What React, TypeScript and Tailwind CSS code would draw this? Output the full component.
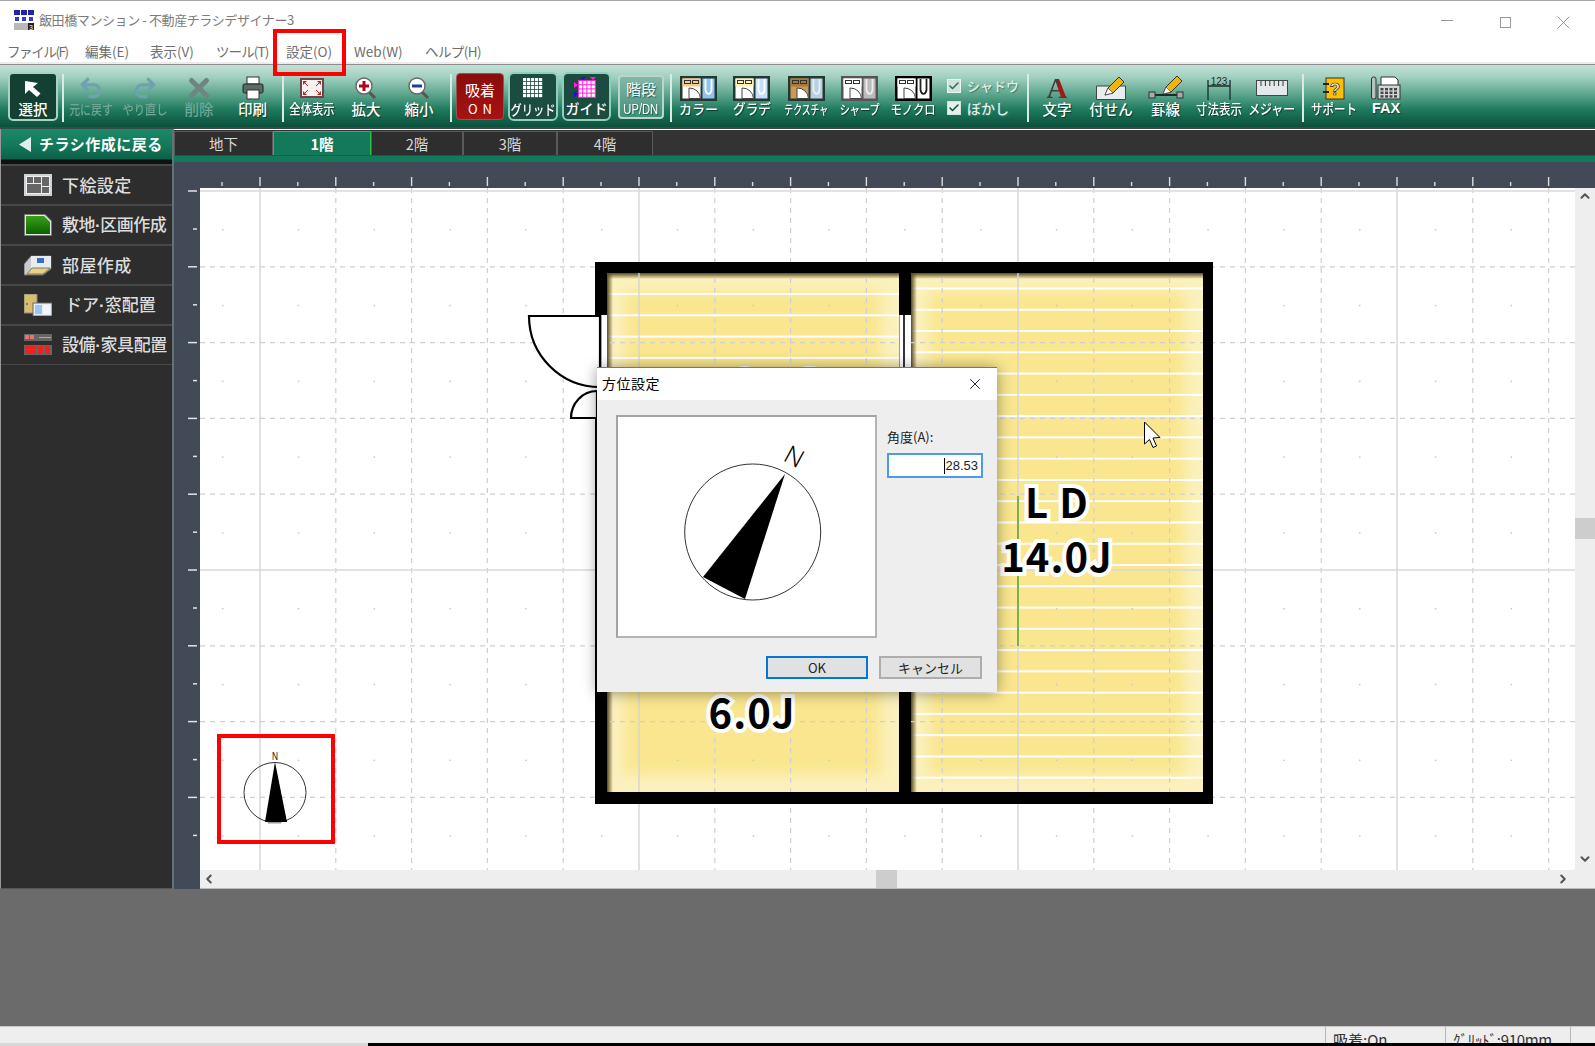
import { Check, ChevronDown, ChevronLeft, ChevronRight, ChevronUp, Redo2, Undo2, X } from 'lucide-react';
import type { ReactNode } from 'react';

const range = (n: number) => Array.from({ length: n }, (_, i) => i);
const STEP = 75.8;

const menus = [
  { label: 'ファイル(F)', cls: 'w-[60px] ml-[7px] tracking-[-1.4px]' },
  { label: '編集(E)', cls: 'w-[47px] ml-[18px]' },
  { label: '表示(V)', cls: 'w-[48px] ml-[18px]' },
  { label: 'ツール(T)', cls: 'w-[51px] ml-[18px] tracking-[-0.9px]' },
  { label: '設定(O)', cls: 'w-[50px] ml-[19px]' },
  { label: 'Web(W)', cls: 'w-[53px] ml-[18px]' },
  { label: 'ヘルプ(H)', cls: 'w-[57px] ml-[18px] tracking-[-0.6px]' },
];

function Tool({ w, label, icon, dim, small }: { w: string; label: string; icon: ReactNode; dim?: boolean; small?: string }) {
  return (
    <div className={`${w} h-[50px] mt-[10px] flex flex-col items-center shrink-0`}>
      <div className="h-[26px] flex items-center justify-center">{icon}</div>
      <div
        className={`h-[15px] leading-[15px] whitespace-nowrap flex justify-center w-full font-medium ${dim ? 'text-[#74a596]' : 'text-white [text-shadow:1px_1px_1px_#123c30]'}`}
      >
        <span className={`block ${small ?? 'text-[14.5px]'}`}>{label}</span>
      </div>
    </div>
  );
}

function Sep({ cls }: { cls: string }) {
  return <div className={`w-[2px] h-[48px] mt-[9px] bg-[#d8ebe4] shrink-0 ${cls}`} />;
}

function PlanIcon({ frame, room, bath, tub, floor }: { frame: string; room: string; bath: string; tub: string; floor: string }) {
  return (
    <svg width="37" height="25" viewBox="0 0 37 25">
      <rect width="37" height="25" fill={frame} />
      <rect x="2.5" y="2.5" width="18" height="20" fill={floor} />
      <rect x="2.5" y="2.5" width="18" height="8" fill={room} />
      <rect x="4.5" y="4.5" width="6" height="3" fill="none" stroke="#333" />
      <rect x="12.5" y="4.5" width="6" height="3" fill="none" stroke="#333" />
      <path d="M9 12 L9 22.5 L20.5 22.5 A11 11 0 0 0 9 12Z" fill="#fff" stroke="#444" />
      <rect x="22.5" y="2.5" width="12" height="20" fill={bath} />
      <path d="M25.5 3 V14 A3.2 6 0 0 0 31.5 14 V3" fill="none" stroke={tub} strokeWidth="1.8" />
    </svg>
  );
}

function Pencil({ x, y }: { x: number; y: number }) {
  return (
    <g transform={`translate(${x} ${y})`}>
      <path d="M0 18 L3 11 L14 0 L19 5 L8 16Z" fill="#f3b40a" stroke="#333" strokeWidth="1" />
      <path d="M0 18 L3 11 L8 16Z" fill="#fff" stroke="#333" strokeWidth="0.6" />
    </g>
  );
}

function SideIcon({ kind }: { kind: number }) {
  if (kind === 0)
    return (
      <svg width="28" height="22" viewBox="0 0 28 22">
        <rect width="28" height="22" fill="#cfd4d8" />
        <rect x="2" y="2" width="24" height="18" fill="#eef0f2" />
        <rect x="3" y="3" width="6" height="6" fill="#666" />
        <rect x="10" y="3" width="7" height="6" fill="#666" />
        <rect x="18" y="3" width="7" height="9" fill="#666" />
        <rect x="3" y="10" width="14" height="9" fill="#666" />
        <rect x="18" y="13" width="7" height="6" fill="#666" />
      </svg>
    );
  if (kind === 1)
    return (
      <svg width="28" height="22" viewBox="0 0 28 22">
        <defs>
          <linearGradient id="lot" x1="0" y1="0" x2="0" y2="1">
            <stop offset="0" stopColor="#3aa018" />
            <stop offset="1" stopColor="#0b6200" />
          </linearGradient>
        </defs>
        <path d="M0.5 0.5H21L27.5 7V21.5H0.5Z" fill="#e8e8e8" stroke="#777" />
        <path d="M2 2H20L26 8V20H2Z" fill="url(#lot)" />
      </svg>
    );
  if (kind === 2)
    return (
      <svg width="28" height="22" viewBox="0 0 28 22">
        <path d="M0 10 L7 2 H27 V15 L19 21 H0Z" fill="#c8ccd0" stroke="#666" />
        <rect x="7" y="2" width="20" height="12" fill="#e8ecf0" />
        <rect x="13" y="4" width="7" height="5" fill="#3a6ec0" />
        <path d="M3 20 L8 14 H26 L19 20Z" fill="#e8cf8a" stroke="#8a7a50" />
      </svg>
    );
  if (kind === 3)
    return (
      <svg width="28" height="22" viewBox="0 0 28 22">
        <rect x="0" y="0" width="13" height="19" fill="#d8bd6e" stroke="#888" />
        <circle cx="3" cy="10" r="0.8" fill="#333" />
        <rect x="9" y="9" width="19" height="13" fill="#e8ecf4" stroke="#666" />
        <rect x="11" y="11" width="7" height="9" fill="#9cc4f0" />
        <rect x="19" y="11" width="7" height="9" fill="#f2f6fc" />
      </svg>
    );
  return (
    <svg width="28" height="22" viewBox="0 0 28 22">
      <rect y="0" width="28" height="7" fill="#666" />
      <rect x="1" y="1" width="4" height="4" fill="#f07070" />
      <rect x="6" y="1" width="4" height="4" fill="#f07070" />
      <rect x="15" y="3" width="12" height="1" fill="#aaa" />
      <rect y="11" width="28" height="10" fill="#666" />
      <rect x="1" y="12" width="11" height="3" fill="#ee2020" />
      <rect x="1" y="16" width="11" height="4" fill="#ee2020" />
      <rect x="14" y="12" width="5" height="8" fill="#ee2020" />
      <rect x="21" y="12" width="5" height="8" fill="#ee2020" />
    </svg>
  );
}

const sideItems = [
  { label: '下絵設定', cls: 'ml-[10px] tracking-[0.4px]' },
  { label: '敷地·区画作成', cls: 'ml-[10px] tracking-[-0.5px]' },
  { label: '部屋作成', cls: 'ml-[10px] tracking-[0.4px]' },
  { label: 'ドア·窓配置', cls: 'ml-[13px]' },
  { label: '設備·家具配置', cls: 'ml-[10px] tracking-[-0.4px]' },
];

const tabs = [
  { label: '地下', w: 'w-[99px]' },
  { label: '1階', w: 'w-[98px]', active: true },
  { label: '2階', w: 'w-[92px]' },
  { label: '3階', w: 'w-[94px]' },
  { label: '4階', w: 'w-[96px]' },
];

function FloorPlan() {
  return (
    <svg className="absolute inset-0" width="1375" height="682" viewBox="200 188 1375 682">
      <defs>
        <filter id="soft" x="-20%" y="-20%" width="140%" height="140%">
          <feGaussianBlur stdDeviation="7" />
        </filter>
        <clipPath id="roomA">
          <rect x="607" y="273" width="292" height="519" />
        </clipPath>
        <clipPath id="roomB">
          <rect x="911" y="273" width="292" height="519" />
        </clipPath>
        <linearGradient id="shadeTop" x1="0" y1="0" x2="0" y2="1">
          <stop offset="0" stopColor="#5a4c20" />
          <stop offset="1" stopColor="#5a4c20" stopOpacity="0" />
        </linearGradient>
        <linearGradient id="shadeLeft" x1="0" y1="0" x2="1" y2="0">
          <stop offset="0" stopColor="#5a4c20" />
          <stop offset="1" stopColor="#5a4c20" stopOpacity="0" />
        </linearGradient>
      </defs>
      {/* walls */}
      <rect x="595" y="262" width="618" height="542" fill="#000" />
      <g clipPath="url(#roomA)">
        <rect x="607" y="273" width="292" height="519" fill="#fbf1bd" />
        <rect x="625" y="291" width="256" height="483" fill="#f9e68e" filter="url(#soft)" />
        {range(4).map((i) => (
          <rect key={i} x="607" y={293 + i * 21.3} width="292" height="2" fill="#fff" />
        ))}
        <rect x="607" y="273" width="292" height="6" fill="url(#shadeTop)" />
        <rect x="607" y="273" width="6" height="519" fill="url(#shadeLeft)" />
      </g>
      <g clipPath="url(#roomB)">
        <rect x="911" y="273" width="292" height="519" fill="#fbf1bd" />
        <rect x="929" y="291" width="256" height="483" fill="#f9e68e" filter="url(#soft)" />
        {range(24).map((i) => (
          <rect key={i} x="911" y={287.5 + i * 21.27} width="292" height="2" fill="#fff" />
        ))}
        <rect x="911" y="273" width="292" height="6" fill="url(#shadeTop)" />
        <rect x="911" y="273" width="6" height="519" fill="url(#shadeLeft)" />
      </g>
      {/* grid */}
      {range(18).map((i) => {
        const x = 260 + i * STEP;
        const solid = i % 5 === 0;
        return <line key={i} x1={x} x2={x} y1="188" y2="870" stroke={solid ? '#d4d4d4' : '#cfcfcf'} strokeWidth={solid ? 1.4 : 1.2} strokeDasharray={solid ? undefined : '5 5'} />;
      })}
      {range(10).map((i) => {
        const y = 191 + i * STEP;
        const solid = i % 5 === 0;
        return <line key={i} x1="200" x2="1575" y1={y} y2={y} stroke={solid ? '#d8d8d8' : '#cfcfcf'} strokeWidth={solid ? 1.6 : 1.2} strokeDasharray={solid ? undefined : '5 5'} />;
      })}
      {range(18).map((i) =>
        range(9).map((j) => <rect key={`${i}-${j}`} x={222 + i * STEP} y={229 + j * STEP} width="1.5" height="1.5" fill="#c8c8c8" />),
      )}
      {/* wall covers over grid */}
      <path d="M595 262H1213V804H595ZM607 273V792H899V273ZM911 273V792H1203V273Z" fill="#000" fillRule="evenodd" />
      {/* openings */}
      <rect x="595" y="315" width="12" height="103" fill="#fff" />
      <line x1="600.5" x2="600.5" y1="315" y2="390" stroke="#000" strokeWidth="1.6" />
      <path d="M529 316 H600 V387 A71 71 0 0 1 529 316Z" fill="#fff" stroke="#000" strokeWidth="2.2" />
      <path d="M597 391 A26 27 0 0 0 571 418 H597Z" fill="#fff" stroke="#000" strokeWidth="2.2" />
      <rect x="899" y="315" width="12" height="52" fill="#fff" />
      <line x1="899.5" x2="899.5" y1="315" y2="367" stroke="#999" strokeWidth="1" />
      <line x1="904" x2="904" y1="315" y2="367" stroke="#000" strokeWidth="1.6" />
      <ellipse cx="745" cy="369" rx="9" ry="3" fill="#fff" />
      <ellipse cx="810" cy="369" rx="12" ry="3" fill="#fff" />
      {/* door on LD */}
      <line x1="1018" x2="1018" y1="496" y2="646" stroke="#5aa02c" strokeWidth="1.5" />
      {/* small compass */}
      <ellipse cx="275" cy="792.5" rx="31" ry="30" fill="none" stroke="#333" strokeWidth="1" />
      <path d="M275 762 L287 822 H265Z" fill="#000" />
      <rect x="268" y="822" width="13" height="1.5" fill="#999" />
      <text x="275" y="760" textAnchor="middle" fontFamily="Liberation Sans" fontSize="11" textLength="6" lengthAdjust="spacingAndGlyphs" fill="#111">
        N
      </text>
      {/* mouse pointer */}
      <path d="M1144.5 422 V444 L1149.5 439.5 L1153 447.5 L1156.5 446 L1153 438 L1160 437.5Z" fill="#fff" stroke="#000" strokeWidth="1" />
    </svg>
  );
}

export default function App() {
  return (
    <div className="relative w-[1595px] h-[1046px] overflow-hidden flex flex-col bg-white font-['Noto_Sans_CJK_JP','Noto_Sans',sans-serif]">
      {/* title bar */}
      <div className="h-[39px] shrink-0 border-t border-[#a8a8a8] flex items-center relative">
        <svg className="ml-[14px]" width="20" height="20" viewBox="0 0 20 20">
          <rect width="20" height="20" fill="#fff" />
          {[0, 7, 14].map((x) => (
            <rect key={x} x={x} y="0" width="6" height="5" fill="#2222b0" />
          ))}
          {[1, 8, 15].map((x) => (
            <rect key={x} x={x} y="7" width="4" height="4" fill="#3a3ac8" />
          ))}
          <rect y="13" width="20" height="7" fill="#b8b8b8" />
          <rect x="14" y="13" width="6" height="7" fill="#222" />
          <text x="15" y="19.5" fontSize="7" fill="#fff" fontFamily="Liberation Sans">
            3
          </text>
        </svg>
        <span className="ml-[5px] text-[13px] text-[#7c7c7c] tracking-[-0.4px] whitespace-pre">飯田橋マンション - 不動産チラシデザイナー3</span>
        <div className="absolute left-[1441px] top-[19px] w-[12px] h-px bg-[#999]" />
        <div className="absolute left-[1500px] top-[16px] w-[11px] h-[11px] border border-[#999]" />
        <svg className="absolute left-[1557px] top-[15px]" width="13" height="13" viewBox="0 0 13 13">
          <path d="M0.5 0.5 L12.5 12.5 M12.5 0.5 L0.5 12.5" stroke="#999" strokeWidth="1" />
        </svg>
      </div>

      {/* menu bar */}
      <div className="h-[23px] shrink-0 flex items-center text-[13.5px] text-[#6e6e6e] whitespace-nowrap pt-[2px]">
        {menus.map((m) => (
          <span key={m.label} className={`block ${m.cls}`}>
            {m.label}
          </span>
        ))}
      </div>
      <div className="h-[3px] shrink-0 bg-[#ececec] border-b border-[#8c8c8c]" />

      {/* toolbar */}
      <div className="h-[62px] shrink-0 flex items-start pl-[8px] bg-[linear-gradient(180deg,#c4e1d7_0%,#a0cfc0_20%,#5aa58c_48%,#1f7a5e_72%,#0a503c_100%)]">
        <div className="w-[50px] h-[49px] mt-[7px] rounded-[5px] border-2 border-[#a9d3c5] bg-[#143f33] flex flex-col items-center shrink-0">
          <svg className="mt-[6px]" width="20" height="18" viewBox="0 0 20 18">
            <path d="M2 1 V14 L6 10 L14 17 L17.5 13.5 L10 7 L15 3Z" fill="#fff" />
          </svg>
          <span className="text-[14.5px] leading-[18px] mt-[2px] text-white font-medium">選択</span>
        </div>
        <Sep cls="ml-[4px]" />
        <Tool w="w-[54px]" label="元に戻す" dim small="text-[13px] scale-x-[.84]" icon={<Undo2 size={26} strokeWidth={3} color="#6da3ad" />} />
        <Tool w="w-[54px]" label="やり直し" dim small="text-[13px] scale-x-[.87]" icon={<Redo2 size={26} strokeWidth={3} color="#6da3ad" />} />
        <Tool w="w-[54px]" label="削除" dim icon={<X size={30} strokeWidth={4} color="#6f8680" />} />
        <Tool
          w="w-[53px]"
          label="印刷"
          icon={
            <svg width="22" height="24" viewBox="0 0 22 24">
              <rect x="5" y="1" width="12" height="7" fill="#fff" stroke="#333" />
              <rect x="1" y="8" width="20" height="9" rx="1.5" fill="#5a6a66" stroke="#222" />
              <rect x="5" y="14" width="12" height="9" fill="#fff" stroke="#333" />
            </svg>
          }
        />
        <Sep cls="ml-[3px]" />
        <Tool
          w="w-[56px]"
          label="全体表示"
          small="text-[13.5px] scale-x-[.84]"
          icon={
            <svg width="24" height="20" viewBox="0 0 24 20">
              <rect width="24" height="20" fill="#6e4444" />
              <rect x="2" y="2" width="20" height="16" fill="#f6f2f2" />
              <path d="M3 3h4l-4 4zM21 3h-4l4 4zM3 17h4l-4-4zM21 17h-4l4-4z" fill="#c02828" />
              <path d="M5 5 L8 8 M19 5 L16 8 M5 15 L8 12 M19 15 L16 12" stroke="#c02828" strokeWidth="1" />
            </svg>
          }
        />
        <Tool
          w="w-[52px]"
          label="拡大"
          icon={
            <svg width="22" height="23" viewBox="0 0 22 23">
              <line x1="14" y1="15" x2="20" y2="21" stroke="#555" strokeWidth="3" />
              <circle cx="9" cy="9" r="8" fill="#fff" stroke="#666" strokeWidth="1.4" />
              <path d="M4 9 H14 M9 4 V14" stroke="#b3061e" strokeWidth="3" />
            </svg>
          }
        />
        <Tool
          w="w-[54px]"
          label="縮小"
          icon={
            <svg width="22" height="23" viewBox="0 0 22 23">
              <line x1="14" y1="15" x2="20" y2="21" stroke="#555" strokeWidth="3" />
              <circle cx="9" cy="9" r="8" fill="#fff" stroke="#666" strokeWidth="1.4" />
              <path d="M4 9 H14" stroke="#1c3f9c" strokeWidth="3" />
            </svg>
          }
        />
        <Sep cls="ml-[4px]" />
        <div className="w-[48px] h-[47px] mt-[8px] ml-[4px] rounded-[4px] border border-[#9c5050] bg-[linear-gradient(180deg,#8a0c0c,#a81212)] flex flex-col items-center shrink-0 text-white">
          <span className="text-[15px] leading-[22px] mt-[5px]">吸着</span>
          <span className="text-[13px] leading-[16px] tracking-[5px] pl-[5px]">ON</span>
        </div>
        <div className="w-[50px] h-[49px] mt-[7px] ml-[4px] rounded-[6px] border-2 border-[#8fd0bc] bg-[#1b4c3f] flex flex-col items-center shrink-0">
          <svg className="mt-[4px]" width="20" height="20" viewBox="0 0 20 20">
            {range(25).map((i) => (
              <rect key={i} x={(i % 5) * 4} y={Math.floor(i / 5) * 4} width="3.2" height="3.2" fill="#fff" />
            ))}
          </svg>
          <span className="block text-[14px] leading-[20px] mt-[1px] scale-x-[.8] whitespace-nowrap text-white font-medium">グリッド</span>
        </div>
        <div className="w-[49px] h-[49px] mt-[7px] ml-[4px] rounded-[6px] border-2 border-[#8fd0bc] bg-[#1b4c3f] flex flex-col items-center shrink-0">
          <svg className="mt-[3px]" width="28" height="21" viewBox="0 0 28 21">
            <rect x="5" y="3" width="18" height="18" fill="#ff20e0" />
            {range(16).map((i) => (
              <rect key={i} x={6 + (i % 4) * 4.2} y={4 + Math.floor(i / 4) * 4.2} width="3.2" height="3.2" fill="#fff" />
            ))}
            <path d="M7 0 H13 L10 3Z" fill="#1414d8" />
            <path d="M17 0 H23 L20 3Z" fill="#ff20e0" />
            <path d="M1 5 L5 8 L1 11Z" fill="#ff20e0" />
            <path d="M1 14 L5 17 L1 20Z" fill="#1414d8" />
          </svg>
          <span className="text-[14px] leading-[20px] text-white font-medium">ガイド</span>
        </div>
        <div className="w-[46px] h-[44px] mt-[10px] ml-[7px] rounded-[4px] border-2 border-[#b9d6cc] bg-[linear-gradient(180deg,#84b8a7,#42907a)] flex flex-col items-center shrink-0 text-white [text-shadow:1px_1px_1px_#24584a] leading-none">
          <span className="text-[15px] leading-[22px] mt-px">階段</span>
          <span className="block text-[14px] leading-[16px] mt-px scale-x-[.8] font-['Liberation_Sans',sans-serif]">UP/DN</span>
        </div>
        <Sep cls="ml-[6px]" />
        <Tool w="w-[53px]" label="カラー" small="text-[13px]" icon={<PlanIcon frame="#223830" room="#f5c98a" floor="#fff" bath="#8fc4ef" tub="#fff" />} />
        <Tool w="w-[53px]" label="グラデ" small="text-[14px] scale-x-[.9]" icon={<PlanIcon frame="#223830" room="#fff2b8" floor="#fff" bath="#c4e0fa" tub="#fff" />} />
        <Tool w="w-[56px]" label="テクスチャ" small="text-[13px] scale-x-[.68]" icon={<PlanIcon frame="#223830" room="#a87a3a" floor="#c89a5a" bath="#b8d0e0" tub="#e4eef4" />} />
        <Tool w="w-[51px]" label="シャープ" small="text-[13px] scale-x-[.78]" icon={<PlanIcon frame="#555" room="#fff" floor="#fff" bath="#bbb" tub="#eee" />} />
        <Tool w="w-[56px]" label="モノクロ" small="text-[13px] scale-x-[.87]" icon={<PlanIcon frame="#000" room="#fff" floor="#fff" bath="#fff" tub="#222" />} />
        <div className="w-[80px] ml-[6px] mt-[14px] shrink-0 flex flex-col gap-[8px] text-[#e4efeb] font-medium [text-shadow:1px_1px_1px_#3c7a66]">
          <div className="flex items-center h-[14px] gap-[6px]">
            <span className="w-[14px] h-[14px] bg-[#cfe3dc] border border-[#e8f4ef] flex items-center justify-center">
              <Check size={12} strokeWidth={3} color="#2c6a58" />
            </span>
            <span className="text-[13px]">シャドウ</span>
          </div>
          <div className="flex items-center h-[14px] gap-[6px]">
            <span className="w-[14px] h-[14px] bg-[#e4f0ec] border border-[#cfe3dc] flex items-center justify-center">
              <Check size={12} strokeWidth={3} color="#134a3a" />
            </span>
            <span className="text-[14px]">ぼかし</span>
          </div>
        </div>
        <Sep cls="" />
        <Tool
          w="w-[56px]"
          label="文字"
          icon={
            <span className="block text-[29px] leading-[26px] font-bold font-['Liberation_Serif',serif] text-transparent bg-clip-text bg-[linear-gradient(90deg,#3c3c3c_48%,#a01818_58%)] [text-shadow:none]">
              A
            </span>
          }
        />
        <Tool
          w="w-[52px]"
          label="付せん"
          icon={
            <svg width="30" height="26" viewBox="0 0 30 26">
              <path d="M0.5 11 H29.5 V24.5 H0.5Z" fill="#e8eef0" stroke="#444" />
              <Pencil x={9} y={2} />
            </svg>
          }
        />
        <Tool
          w="w-[57px]"
          label="罫線"
          icon={
            <svg width="36" height="26" viewBox="0 0 36 26">
              <line x1="5" y1="20" x2="31" y2="20" stroke="#1c2c28" strokeWidth="2" />
              <rect x="1" y="17" width="6" height="6" fill="#aaa" stroke="#333" />
              <rect x="29" y="17" width="6" height="6" fill="#aaa" stroke="#333" />
              <Pencil x={15} y={1} />
            </svg>
          }
        />
        <Tool
          w="w-[49px]"
          label="寸法表示"
          small="text-[13.5px] scale-x-[.85]"
          icon={
            <svg width="24" height="26" viewBox="0 0 24 26">
              <text x="12" y="10" textAnchor="middle" fontFamily="Liberation Sans" fontSize="10" fill="#1c2c28">
                123
              </text>
              <path d="M1 5 V25 M23 5 V25 M1 11 H23" stroke="#1c2c28" strokeWidth="1.3" fill="none" />
            </svg>
          }
        />
        <Tool
          w="w-[58px]"
          label="メジャー"
          small="text-[14px] scale-x-[.85]"
          icon={
            <svg width="32" height="16" viewBox="0 0 32 16">
              <rect x="0.5" y="0.5" width="31" height="15" fill="#e4e8ec" stroke="#444" />
              {range(6).map((i) => (
                <line key={i} x1={5 + i * 4.4} x2={5 + i * 4.4} y1="1" y2="6" stroke="#333" />
              ))}
            </svg>
          }
        />
        <Sep cls="ml-px" />
        <Tool
          w="w-[59px]"
          label="サポート"
          small="text-[14px] scale-x-[.82]"
          icon={
            <svg width="22" height="23" viewBox="0 0 22 23">
              <rect x="3" y="1" width="18" height="21" fill="#ffc000" stroke="#333" />
              <path d="M0 7 H6 M0 15 H6" stroke="#222" strokeWidth="2" />
              <text x="12" y="18" textAnchor="middle" fontFamily="Liberation Sans" fontWeight="700" fontSize="17" fill="#fff" stroke="#222" strokeWidth="0.7">
                ?
              </text>
            </svg>
          }
        />
        <Tool
          w="w-[46px]"
          label="FAX"
          small="text-[14.5px] font-['Liberation_Sans',sans-serif] font-bold"
          icon={
            <svg width="30" height="24" viewBox="0 0 30 24">
              <rect x="0.5" y="1" width="4.5" height="22" rx="2" fill="#b8c0c0" stroke="#333" />
              <path d="M10 1 H24 L27 4 V10 H10Z" fill="#fff" stroke="#333" />
              <rect x="7" y="9" width="22" height="14" fill="#d0d6d8" stroke="#333" />
              {range(12).map((i) => (
                <rect key={i} x={9.5 + (i % 4) * 4.5} y={12 + Math.floor(i / 4) * 3.6} width="3" height="2.4" fill="#444" />
              ))}
            </svg>
          }
        />
      </div>
      <div className="h-[2px] shrink-0 bg-[#3b4a46]" />

      {/* work area */}
      <div className="h-[760px] shrink-0 flex">
        <aside className="w-[172px] shrink-0 bg-[#2d2d2d] flex flex-col border-b border-[#555] border-l border-l-[#999]">
          <div className="h-[31px] flex items-center bg-[linear-gradient(180deg,#1b8a68,#14785a_55%,#0b6148)] border-b border-[#0a3a2c]">
            <svg className="ml-[18px]" width="12" height="15" viewBox="0 0 12 15">
              <path d="M12 0 V15 L0 7.5Z" fill="#dfeee8" />
            </svg>
            <span className="ml-[8px] text-[15px] font-bold text-white tracking-[0.5px] whitespace-nowrap">チラシ作成に戻る</span>
          </div>
          <div className="h-[4px] bg-[#111]" />
          {sideItems.map((item, i) => {
            const [head, tail] = item.label.split('·');
            return (
              <div key={item.label} className="h-[40px] flex items-center pl-[23px] border-t-2 border-[#484848] text-[#dcdcdc] text-[17px] font-medium whitespace-nowrap">
                <SideIcon kind={i} />
                <span className={item.cls}>
                  {head}
                  {tail && <span className="font-['Liberation_Sans',sans-serif] font-bold">·</span>}
                  {tail}
                </span>
              </div>
            );
          })}
          <div className="h-px bg-[#484848]" />
        </aside>

        <div className="flex-1 min-w-0 flex flex-col border-l-2 border-[#5f7476]">
          {/* floor tabs */}
          <div className="h-[25px] shrink-0 mt-px flex items-end bg-[#333]">
            {tabs.map((t) => (
              <div
                key={t.label}
                className={`${t.w} h-[24px] flex items-center justify-center text-[14.5px] border-x border-t ${
                  t.active ? 'bg-[#14795a] border-[#27c244] text-white font-bold' : 'bg-[#2e2e2e] border-[#5a5a5a] text-[#d8d8d8]'
                }`}
              >
                {t.label}
              </div>
            ))}
          </div>
          <div className="h-[7px] shrink-0 bg-[#14795a] border-t border-[#0f6a1c]" />

          {/* ruler */}
          <div className="h-[26px] shrink-0 bg-[#434a57]">
            <svg width="1421" height="26" viewBox="174 162 1421 26">
              {range(18).map((i) => (
                <line key={i} x1={260 + i * STEP} x2={260 + i * STEP} y1="177" y2="186" stroke="#dcdcdc" strokeWidth="1.4" />
              ))}
              {range(18).map((i) => (
                <line key={i} x1={222 + i * STEP} x2={222 + i * STEP} y1="182" y2="186" stroke="#dcdcdc" strokeWidth="1.4" />
              ))}
            </svg>
          </div>

          <div className="flex-1 min-h-0 flex bg-[#eee]">
            <div className="w-[26px] shrink-0 bg-[#434a57]">
              <svg width="26" height="701" viewBox="174 188 26 701">
                {range(9).map((i) => (
                  <line key={i} x1="188" x2="197" y1={191 + i * STEP} y2={191 + i * STEP} stroke="#e4e4e4" strokeWidth="1.5" />
                ))}
                {range(9).map((i) => (
                  <line key={i} x1="193" x2="197" y1={229 + i * STEP} y2={229 + i * STEP} stroke="#e4e4e4" strokeWidth="1.5" />
                ))}
              </svg>
            </div>
            <div className="flex-1 min-w-0 flex flex-col">
              <div className="flex-1 min-h-0 flex">
                {/* drawing canvas */}
                <div className="relative w-[1375px] bg-white overflow-hidden rounded-br-[3px]">
                  <FloorPlan />
                  <div className="absolute left-[857px] top-[295px] -translate-x-1/2 text-[40px] leading-[36px] font-bold tracking-[1px] whitespace-nowrap text-black [-webkit-text-stroke:8px_white] [paint-order:stroke_fill]">
                    L D
                  </div>
                  <div className="absolute left-[857px] top-[349px] -translate-x-1/2 text-[40px] leading-[36px] font-bold tracking-[1px] whitespace-nowrap text-black [-webkit-text-stroke:8px_white] [paint-order:stroke_fill]">
                    14.0J
                  </div>
                  <div className="absolute left-[552px] top-[505px] -translate-x-1/2 text-[40px] leading-[36px] font-bold tracking-[1px] whitespace-nowrap text-black [-webkit-text-stroke:8px_white] [paint-order:stroke_fill]">
                    6.0J
                  </div>
                  <div className="absolute left-[17px] top-[546px] w-[118px] h-[110px] border-4 border-[#ff0000]" />

                  {/* dialog */}
                  <div className="absolute left-[397px] top-[179px] w-[400px] h-[325px] flex flex-col bg-[#eeeeee] border-t border-[#777] shadow-[0_1px_14px_rgba(0,0,0,0.4)]">
                    <div className="h-[32px] shrink-0 bg-white flex items-start justify-between pl-[5px] pr-[13px] pt-[5px]">
                      <span className="text-[14px] leading-[20px] tracking-[0.5px] text-black">方位設定</span>
                      <X size={18} strokeWidth={1.2} color="#111" className="mt-[2px]" />
                    </div>
                    <div className="flex pl-[19px] pt-[15px]">
                      <div className="w-[261px] h-[223px] shrink-0 bg-white border-2 border-t-[#a4a4a4] border-l-[#a4a4a4] border-b-[#b4b4b4] border-r-[#b4b4b4]">
                        <svg width="257" height="219" viewBox="618 417 257 219">
                          <circle cx="752.7" cy="532" r="68" fill="none" stroke="#333" strokeWidth="1" />
                          <path d="M785 474 L745 599 L703 577Z" fill="#000" />
                          <text
                            x="0"
                            y="0"
                            transform="translate(782 460) rotate(28.53)"
                            fontFamily="Noto Sans"
                            fontWeight="300"
                            fontSize="25"
                            fill="#000"
                          >
                            N
                          </text>
                        </svg>
                      </div>
                      <div className="ml-[10px] w-[96px]">
                        <div className="text-[13px] leading-[20px] mt-[12px] text-[#222] whitespace-nowrap">角度(A):</div>
                        <div className="h-[25px] mt-[6px] bg-white border-2 border-[#4c9be6] flex items-center justify-end pr-[3px] font-['Liberation_Sans',sans-serif] text-[13px] text-[#222]">
                          <span className="w-px h-[16px] bg-black" />
                          28.53
                        </div>
                      </div>
                    </div>
                    <div className="flex justify-end gap-[11px] pr-[15px] mt-[18px]">
                      <button className="w-[102px] h-[23px] bg-[#e1e1e1] border-2 border-[#0078d7] text-[13px] leading-none text-[#222]">OK</button>
                      <button className="w-[103px] h-[23px] bg-[#e1e1e1] border-2 border-[#adadad] text-[13px] leading-none text-[#222]">キャンセル</button>
                    </div>
                  </div>
                </div>
                {/* vertical scrollbar */}
                <div className="w-[20px] shrink-0 flex flex-col items-center relative">
                  <ChevronUp size={14} strokeWidth={3.5} color="#555" className="mt-[1px]" />
                  <div className="absolute top-[330px] left-0 w-[20px] h-[21px] bg-[#cdcdcd]" />
                  <ChevronDown size={14} strokeWidth={3.5} color="#555" className="mt-auto mb-[4px]" />
                </div>
              </div>
              {/* horizontal scrollbar */}
              <div className="h-[19px] shrink-0 flex items-center relative border-b border-[#bbb]">
                <ChevronLeft size={14} strokeWidth={3.5} color="#555" className="ml-[2px]" />
                <div className="absolute left-[676px] top-0 w-[21px] h-[18px] bg-[#cdcdcd]" />
                <ChevronRight size={14} strokeWidth={3.5} color="#555" className="ml-auto mr-[25px]" />
              </div>
            </div>
          </div>
        </div>
      </div>

      {/* empty area */}
      <div className="h-[138px] shrink-0 bg-[#6b6b6b] border-b border-[#c8c8c8]" />

      {/* status bar */}
      <div className="h-[16px] shrink-0 bg-[#eeeeee] overflow-hidden flex justify-end text-[15px] leading-[20px] text-[#333] whitespace-nowrap">
        <div className="w-[120px] border-l border-[#b8b8b8] pl-[7px] pt-[3px]">吸着:On</div>
        <div className="w-[125px] border-l border-[#b8b8b8] pl-[7px] pt-[3px] tracking-[-0.3px]">ｸﾞﾘｯﾄﾞ:910mm</div>
        <div className="w-[25px] border-l border-[#b8b8b8]" />
      </div>
      <div className="flex-1 flex bg-[#d8d8d8]">
        <div className="w-[368px]" />
        <div className="flex-1 bg-black" />
      </div>

      {/* red callout on the menu */}
      <div className="absolute left-[273px] top-[29px] w-[73px] h-[47px] border-4 border-[#ff0000]" />
    </div>
  );
}
